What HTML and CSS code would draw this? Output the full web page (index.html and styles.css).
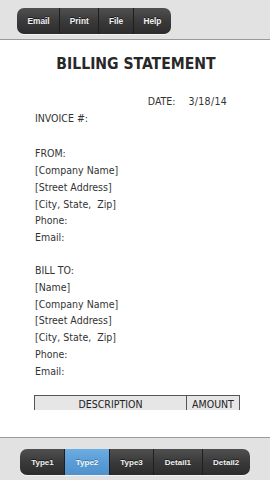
FILE: index.html
```html
<!DOCTYPE html>
<html>
<head>
<meta charset="utf-8">
<link rel="stylesheet" href="styles.css">
</head>
<body>
<div class="app">
  <header class="topbar">
    <nav class="seg">
      <span class="seg-item">Email</span>
      <span class="seg-item">Print</span>
      <span class="seg-item">File</span>
      <span class="seg-item">Help</span>
    </nav>
  </header>
  <main class="doc">
    <h1 class="title">BILLING STATEMENT</h1>
    <div class="date-row"><span>DATE:</span><span class="date-val">3/18/14</span></div>
    <div class="line">INVOICE #:</div>
    <div class="block from">
      <div class="line">FROM:</div>
      <div class="line">[Company Name]</div>
      <div class="line">[Street Address]</div>
      <div class="line">[City, State,&nbsp; Zip]</div>
      <div class="line">Phone:</div>
      <div class="line">Email:</div>
    </div>
    <div class="block billto">
      <div class="line">BILL TO:</div>
      <div class="line">[Name]</div>
      <div class="line">[Company Name]</div>
      <div class="line">[Street Address]</div>
      <div class="line">[City, State,&nbsp; Zip]</div>
      <div class="line">Phone:</div>
      <div class="line">Email:</div>
    </div>
    <div class="table-clip">
      <div class="table-head">
        <div class="th desc">DESCRIPTION</div>
        <div class="th amt">AMOUNT</div>
      </div>
    </div>
  </main>
  <footer class="bottombar">
    <nav class="seg">
      <span class="seg-item">Type1</span>
      <span class="seg-item active">Type2</span>
      <span class="seg-item">Type3</span>
      <span class="seg-item">Detail1</span>
      <span class="seg-item">Detail2</span>
    </nav>
  </footer>
</div>
</body>
</html>
```
FILE: styles.css
```css
* { box-sizing: border-box; }
html, body { margin: 0; padding: 0; }
body {
  width: 270px;
  height: 480px;
  overflow: hidden;
  background: #fff;
}
.app {
  display: flex;
  flex-direction: column;
  height: 480px;
}
.topbar {
  height: 40px;
  flex: none;
  background: #e2e2e2;
  border-bottom: 1px solid #9a9a9a;
  padding: 8px 0 0 17px;
  display: flex;
  align-items: flex-start;
}
.bottombar {
  height: 43px;
  flex: none;
  background: #e2e2e2;
  border-top: 1px solid #9a9a9a;
  padding-top: 11px;
  display: flex;
  justify-content: center;
  align-items: flex-start;
}
.seg {
  display: flex;
  height: 26px;
  border-radius: 7px;
  overflow: hidden;
  background: linear-gradient(#505050, #3a3a3a 50%, #2c2c2c);
  box-shadow: 0 1px 0 rgba(255,255,255,0.6);
}
.seg-item {
  display: flex;
  align-items: center;
  padding: 0 10px;
  font-family: "Liberation Sans", Arial, sans-serif;
  font-weight: bold;
  font-size: 8.3px;
  color: #f2f2f2;
  text-shadow: 0 -1px 0 rgba(0,0,0,0.6);
  border-left: 1px solid #1f1f1f;
}
.seg-item:first-child { border-left: none; padding-left: 11px; }
.topbar .seg-item { padding: 0 9.6px; }
.topbar .seg-item:first-child { padding-left: 10.5px; }
.bottombar .seg-item { padding: 0 10.5px; font-size: 8px; }
.bottombar .seg-item:first-child { padding-left: 11px; }
.seg-item.active {
  background: linear-gradient(#6cade2, #5a9dd6 50%, #4f91cc);
  color: #f4f8fc;
  text-shadow: 0 -1px 0 rgba(0,0,0,0.3);
}
.doc {
  flex: 1;
  overflow: hidden;
  background: #fff;
  font-family: "DejaVu Sans Condensed", "DejaVu Sans", sans-serif;
  color: #333;
  font-size: 10.5px;
  padding: 12px 0 0 35px;
}
.title {
  margin: 0 0 0 -35px;
  padding-left: 2px;
  text-align: center;
  font-size: 15.6px;
  font-weight: bold;
  color: #282828;
  line-height: 24px;
}
.date-row {
  display: flex;
  justify-content: flex-end;
  gap: 13px;
  padding-right: 43px;
  margin-top: 17px;
  line-height: 16.7px;
}
.date-val { letter-spacing: 0.3px; }
.line {
  line-height: 16.7px;
  white-space: nowrap;
}
.block { margin-top: 19px; }
.billto { margin-top: 16.7px; }
.table-clip {
  margin-top: 16px;
  width: 206px;
  margin-left: -1px;
  height: 15px;
  overflow: hidden;
}
.table-head {
  display: flex;
  border: 1px solid #555;
  background: #e6e6e6;
  height: 20px;
  color: #222;
}
.th {
  text-align: center;
  line-height: 12px;
  padding-top: 2px;
}
.desc { width: 152px; border-right: 1px solid #555; }
.amt { flex: 1; }
```
